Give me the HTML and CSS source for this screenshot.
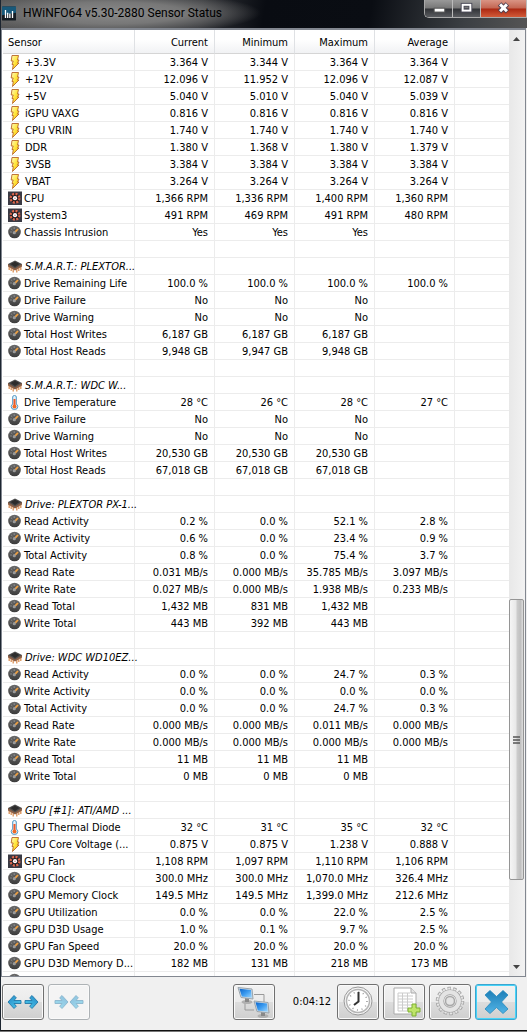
FILE: index.html
```html
<!DOCTYPE html>
<html lang="en">
<head>
<meta charset="utf-8">
<title>HWiNFO64 v5.30-2880 Sensor Status</title>
<link rel="stylesheet" href="styles.css">
<script src="sensors.js" defer></script>
</head>
<body>
<svg class="defs" aria-hidden="true">
  <defs>
    <linearGradient id="gold" x1="0" y1="0" x2="1" y2="1"><stop offset="0" stop-color="#fffbc0"/><stop offset=".5" stop-color="#ffe63c"/><stop offset="1" stop-color="#f4a70c"/></linearGradient>
    <linearGradient id="dial" x1="0" y1="0" x2="0" y2="1"><stop offset="0" stop-color="#6a6a6a"/><stop offset="1" stop-color="#3c3c3c"/></linearGradient>
    <linearGradient id="blue" x1="0" y1="0" x2="1" y2="1"><stop offset="0" stop-color="#2586c4"/><stop offset="1" stop-color="#4fd0f0"/></linearGradient>
    <linearGradient id="screen" x1="0" y1="0" x2="1" y2="1"><stop offset="0" stop-color="#0b65cc"/><stop offset=".5" stop-color="#3c9cf0"/><stop offset="1" stop-color="#a0d8ff"/></linearGradient>
    <linearGradient id="cross" x1="0" y1="0" x2="0" y2="1"><stop offset="0" stop-color="#1d7fb8"/><stop offset="1" stop-color="#52b4e6"/></linearGradient>
    <symbol id="volt" viewBox="0 0 14 15"><path d="M4 .5h6.500l-1 4.500h1.500L9.500 8H11L4.500 14.500l.8-5H4L5.200 6H3.200z" fill="url(#gold)" stroke="#b8662a" stroke-width=".9"/></symbol>
    <symbol id="gauge" viewBox="0 0 14 15"><circle cx="6.500" cy="7" r="6.300" fill="url(#dial)"/><path d="M2.500 7h1M3.500 4.200l.7.6M6.200 2.600v1" stroke="#bbb"/><path d="M7 7.200L10 4" stroke="#f0a040" stroke-width="1.800"/><circle cx="6.300" cy="7.700" r="1.600" fill="#999"/></symbol>
    <symbol id="fan" viewBox="0 0 14 15"><path d="M0 .5h14v13.500H0z" fill="#3a3a44"/><circle cx="7" cy="7.200" r="4.600" fill="#241c20"/><circle cx="7" cy="7.200" r="4.400" fill="none" stroke="#e2684c" stroke-width="2.200" stroke-dasharray="2 1.450"/><circle cx="7" cy="7.200" r="2.100" fill="#fff"/><circle cx="7" cy="7.200" r=".7" fill="#c66"/></symbol>
    <symbol id="chip" viewBox="0 0 14 15"><path d="M1.200 6v5M3.200 7v5M5.200 8v5.500M8.800 8v5.500M10.800 7v5M12.800 6v5" stroke="#d98f55" stroke-width="1.300"/><path d="M0 7.500l7 4 7-4V5H0z" fill="#8a6048"/><path d="M0 5L7 1.500 14 5l-7 4.500z" fill="#4c4c4c"/><path d="M2.500 5L7 2.800 11.500 5 7 8z" fill="#2c2c2c"/></symbol>
    <symbol id="temp" viewBox="0 0 14 15"><path d="M4.700 2q0-1.500 1.800-1.500T8.300 2v7q1.500 1 1.500 2.500 0 3-3.300 3t-3.300-3Q3.200 10 4.700 9z" fill="#e6f3fb" stroke="#4f96c4"/><path d="M6.500 4v6" stroke="#f05a28" stroke-width="2"/><circle cx="6.500" cy="11.500" r="2" fill="#f06a28"/></symbol>
    <symbol id="arrow" viewBox="0 0 15 16"><path d="M1 8l6-6.500 2.300 2.300L7 6.500h7v3H7l2.300 2.700L7 14.500z" fill="url(#blue)" stroke="#2278a8" stroke-width=".9"/></symbol>
  </defs>
</svg>
<main class="window">
  <header class="titlebar">
    <svg class="app-icon" viewBox="0 0 16 16" aria-hidden="true"><rect width="16" height="16" rx="1" fill="#151c22"/><path d="M0 0h16v7L0 10z" fill="#18597a"/><path d="M4 4v9M6.500 7v6M9 8v5M12 5v8" stroke="#fff" stroke-width="1.500"/></svg>
    <h1 class="title">HWiNFO64 v5.30-2880 Sensor Status</h1>
    <div class="caption">
      <button class="cap" aria-label="Minimize"><svg viewBox="0 0 28 17"><rect x="9.500" y="8.500" width="11" height="4" fill="#fff" stroke="#555"/></svg></button>
      <button class="cap" aria-label="Maximize"><svg viewBox="0 0 28 17"><rect x="10" y="5" width="8" height="6" fill="none" stroke="#4b4b58" stroke-width="4"/><rect x="10" y="5" width="8" height="6" fill="none" stroke="#fff" stroke-width="2"/></svg></button>
      <button class="cap cap-close" aria-label="Close"><svg viewBox="0 0 46 17"><path d="M19 4l8 8M27 4l-8 8" stroke="#504050" stroke-width="5"/><path d="M19.500 4.500l7 7M26.500 4.500l-7 7" stroke="#fff" stroke-width="3"/></svg></button>
    </div>
  </header>
  <section class="list">
    <div class="viewport">
      <table class="sensors">
        <colgroup><col class="col-name"><col class="col-value"><col class="col-value"><col class="col-value"><col class="col-value"><col></colgroup>
        <thead><tr><th>Sensor</th><th>Current</th><th>Minimum</th><th>Maximum</th><th>Average</th><th></th></tr></thead>
        <tbody id="rows"></tbody>
      </table>
    </div>
    <div class="scrollbar">
      <button class="step" aria-label="Scroll up"><svg viewBox="0 0 7 4"><path d="M0 4l3.500-4L7 4z" fill="#444"/></svg></button>
      <div class="space-above"></div>
      <div class="thumb"><svg class="grip" viewBox="0 0 7 8"><path d="M0 1h7M0 4h7M0 7h7" stroke="#555" stroke-width="1.500"/></svg></div>
      <div class="space-below"></div>
      <button class="step" aria-label="Scroll down"><svg viewBox="0 0 7 4"><path d="M0 0l3.500 4L7 0z" fill="#444"/></svg></button>
    </div>
  </section>
  <footer class="toolbar">
    <div class="group">
      <button class="tool" aria-label="Expand columns"><svg viewBox="0 0 40 34"><use href="#arrow" x="4" y="9" width="15" height="16"/><use href="#arrow" x="4" y="9" width="15" height="16" transform="matrix(-1 0 0 1 40 0)"/></svg></button>
      <button class="tool" disabled aria-label="Shrink columns"><svg viewBox="0 0 40 34"><use href="#arrow" x="20" y="9" width="15" height="16"/><use href="#arrow" x="20" y="9" width="15" height="16" transform="matrix(-1 0 0 1 40 0)"/></svg></button>
    </div>
    <div class="group">
      <button class="tool" aria-label="Network"><svg viewBox="0 0 40 34"><path d="M20 9.500h10V17M11 18v7h9" fill="none" stroke="#999"/><ellipse cx="13" cy="17" rx="5.500" ry="2" fill="#b0b0b0"/><path d="M11 12h4v5h-4z" fill="#888"/><path d="M4 2.500L18 4l1 10L7 12.500z" fill="#d5dde4" stroke="#99a4ac"/><path d="M5.500 3.800L17 5l.8 7.800L7.800 11.500z" fill="url(#screen)"/><ellipse cx="29" cy="31" rx="5.500" ry="2" fill="#b0b0b0"/><path d="M27 26h4v5h-4z" fill="#888"/><path d="M20 16l14 1.500 1 10.500-12-1.500z" fill="#d5dde4" stroke="#99a4ac"/><path d="M21.500 17.300L33 18.500l.8 8.200-10-1.200z" fill="url(#screen)"/></svg></button>
      <output class="timer">0:04:12</output>
      <button class="tool" aria-label="Reset clock"><svg viewBox="0 0 40 34"><circle cx="20" cy="16" r="14" fill="#f4f4f4" stroke="#999"/><circle cx="20" cy="16" r="11.500" fill="#fff" stroke="#b5b5b5" stroke-width="1.500"/><circle cx="20" cy="16" r="9" fill="none" stroke="#999" stroke-width="1.500" stroke-dasharray="1 3.712"/><path d="M20.500 7v9.500L16 20" fill="none" stroke="#333" stroke-width="2"/></svg></button>
      <button class="tool" aria-label="Log report"><svg viewBox="0 0 40 34"><path d="M10 3h17l5 5v21H10z" fill="#fff" stroke="#aaa"/><path d="M27 3v5h5" fill="#e4e4e4" stroke="#aaa"/><path d="M14 8h12M14 11h15M14 14h15M14 17h15M14 20h14M14 23h9M14 26h9M14 8v18M18.500 8v18M23.500 8v18" stroke="#ccc"/><path d="M28 19h4v4h4v4h-4v4h-4v-4h-4v-4h4z" fill="#bfe569" stroke="#7daf32"/></svg></button>
      <button class="tool" aria-label="Settings"><svg viewBox="0 0 40 34"><circle cx="20" cy="16" r="12.500" fill="none" stroke="#a0a0a0" stroke-width="3.500" stroke-dasharray="3.300 2.310"/><circle cx="20" cy="16" r="12.200" fill="none" stroke="#e6e6e6" stroke-width="2.500" stroke-dasharray="2.200 3.275" stroke-dashoffset="-.5"/><circle cx="20" cy="16" r="8.800" fill="none" stroke="#a0a0a0" stroke-width="5.500"/><circle cx="20" cy="16" r="8.800" fill="none" stroke="#e4e4e4" stroke-width="4.300"/><circle cx="20" cy="16" r="4.500" fill="#e4e4e4" stroke="#a8a8a8" stroke-width="1.500"/></svg></button>
      <button class="tool tool-default" aria-label="Close sensors"><svg viewBox="0 0 40 34"><path d="M14 5.500l6.500 6L27 5.500l5 4.500-6.500 7 6.500 7-5 4.500-6.500-6-6.500 6L9 24l6.500-7L9 10z" fill="url(#cross)" stroke="#2589bd" stroke-width=".8"/></svg></button>
    </div>
  </footer>
</main>
</body>
</html>
```
FILE: sensors.js
```js
// icon | name | current | minimum | maximum | average; an empty line is a spacer row
const readings = `volt|+3.3V|3.364 V|3.344 V|3.364 V|3.364 V
volt|+12V|12.096 V|11.952 V|12.096 V|12.087 V
volt|+5V|5.040 V|5.010 V|5.040 V|5.039 V
volt|iGPU VAXG|0.816 V|0.816 V|0.816 V|0.816 V
volt|CPU VRIN|1.740 V|1.740 V|1.740 V|1.740 V
volt|DDR|1.380 V|1.368 V|1.380 V|1.379 V
volt|3VSB|3.384 V|3.384 V|3.384 V|3.384 V
volt|VBAT|3.264 V|3.264 V|3.264 V|3.264 V
fan|CPU|1,366 RPM|1,336 RPM|1,400 RPM|1,360 RPM
fan|System3|491 RPM|469 RPM|491 RPM|480 RPM
gauge|Chassis Intrusion|Yes|Yes|Yes|

chip|S.M.A.R.T.: PLEXTOR...||||
gauge|Drive Remaining Life|100.0 %|100.0 %|100.0 %|100.0 %
gauge|Drive Failure|No|No|No|
gauge|Drive Warning|No|No|No|
gauge|Total Host Writes|6,187 GB|6,187 GB|6,187 GB|
gauge|Total Host Reads|9,948 GB|9,947 GB|9,948 GB|

chip|S.M.A.R.T.: WDC W...||||
temp|Drive Temperature|28 °C|26 °C|28 °C|27 °C
gauge|Drive Failure|No|No|No|
gauge|Drive Warning|No|No|No|
gauge|Total Host Writes|20,530 GB|20,530 GB|20,530 GB|
gauge|Total Host Reads|67,018 GB|67,018 GB|67,018 GB|

chip|Drive: PLEXTOR PX-1...||||
gauge|Read Activity|0.2 %|0.0 %|52.1 %|2.8 %
gauge|Write Activity|0.6 %|0.0 %|23.4 %|0.9 %
gauge|Total Activity|0.8 %|0.0 %|75.4 %|3.7 %
gauge|Read Rate|0.031 MB/s|0.000 MB/s|35.785 MB/s|3.097 MB/s
gauge|Write Rate|0.027 MB/s|0.000 MB/s|1.938 MB/s|0.233 MB/s
gauge|Read Total|1,432 MB|831 MB|1,432 MB|
gauge|Write Total|443 MB|392 MB|443 MB|

chip|Drive: WDC WD10EZ...||||
gauge|Read Activity|0.0 %|0.0 %|24.7 %|0.3 %
gauge|Write Activity|0.0 %|0.0 %|0.0 %|0.0 %
gauge|Total Activity|0.0 %|0.0 %|24.7 %|0.3 %
gauge|Read Rate|0.000 MB/s|0.000 MB/s|0.011 MB/s|0.000 MB/s
gauge|Write Rate|0.000 MB/s|0.000 MB/s|0.000 MB/s|0.000 MB/s
gauge|Read Total|11 MB|11 MB|11 MB|
gauge|Write Total|0 MB|0 MB|0 MB|

chip|GPU [#1]: ATI/AMD ...||||
temp|GPU Thermal Diode|32 °C|31 °C|35 °C|32 °C
volt|GPU Core Voltage (...|0.875 V|0.875 V|1.238 V|0.888 V
fan|GPU Fan|1,108 RPM|1,097 RPM|1,110 RPM|1,106 RPM
gauge|GPU Clock|300.0 MHz|300.0 MHz|1,070.0 MHz|326.4 MHz
gauge|GPU Memory Clock|149.5 MHz|149.5 MHz|1,399.0 MHz|212.6 MHz
gauge|GPU Utilization|0.0 %|0.0 %|22.0 %|2.5 %
gauge|GPU D3D Usage|1.0 %|0.1 %|9.7 %|2.5 %
gauge|GPU Fan Speed|20.0 %|20.0 %|20.0 %|20.0 %
gauge|GPU D3D Memory D...|182 MB|131 MB|218 MB|173 MB
gauge|||||`;

document.getElementById("rows").innerHTML = readings.split("\n").map(line => {
  const [icon, name = "", ...values] = line.split("|");
  const label = icon
    ? `<span class="name name-${icon}"><svg class="icon" aria-hidden="true"><use href="#${icon}"/></svg>${name}</span>`
    : "";
  const cells = [0, 1, 2, 3].map(i => `<td>${values[i] || ""}</td>`).join("");
  return `<tr><td>${label}</td>${cells}<td></td></tr>`;
}).join("");
```
FILE: styles.css
```css
* { box-sizing: border-box; }
body {
  margin: 0;
  font: 11px/16px "DejaVu Sans Condensed", "DejaVu Sans", sans-serif;
  color: #000;
  background: #777;
}
button { padding: 0; font: inherit; }
button svg { display: block; }
.defs { position: absolute; width: 0; height: 0; }
.window {
  display: flex;
  flex-direction: column;
  height: calc(100vh - 1px);
  border-left: 1px solid #1c2530;
  border-bottom: 1px solid #111;
  background: #f0f0f0;
}
.titlebar {
  display: flex;
  align-items: flex-start;
  height: 28px;
  flex: none;
  padding-left: 1px;
  background:
    radial-gradient(ellipse 150px 22px at 110px 13px, #8b8b8b 0, #777 50%, transparent 100%),
    linear-gradient(100deg, #555 0, #303236 38%, #090c12 50%, #0a0d13 70%, #3b3f43 88%, #555 100%);
}
.app-icon { width: 14px; height: 15px; margin-top: 6px; }
.title {
  flex: 1;
  margin: 5px 0 0 7px;
  font: 12px/16px Roboto, "Noto Sans", sans-serif;
  white-space: nowrap;
}
.caption {
  display: flex;
  border: 1px solid #aaa;
  border-width: 0 0 1px 1px;
  border-radius: 0 0 0 5px;
  overflow: hidden;
}
.cap {
  width: 28px;
  height: 17px;
  border: 0;
  border-right: 1px solid #bbb;
  background: linear-gradient(#999 0, #777 48%, #303236 52%, #5a5c60 100%);
}
.cap-close {
  width: 46px;
  background: linear-gradient(#d99484 0, #c36551 48%, #ab2812 52%, #d15a38 100%);
}
.list {
  display: flex;
  flex: 1;
  min-height: 0;
  margin-right: 1px;
  border: 1px solid #828790;
  border-top-width: 2px;
  background: #fff;
}
.viewport { flex: 1; min-width: 0; overflow: hidden; padding-left: 1px; }
.sensors {
  width: 100%;
  table-layout: fixed;
  border-spacing: 0;
}
.col-name { width: 132px; }
.col-value { width: 80px; }
.sensors th, .sensors td {
  white-space: nowrap;
  text-align: right;
}
.sensors th {
  height: 24px;
  padding: 2px 6px 0 0;
  border-right: 1px solid #dfe1e4;
  border-bottom: 1px solid #d5d5d5;
  background: linear-gradient(#fff 40%, #f1f2f4);
  font-weight: normal;
}
.sensors td {
  height: 17px;
  padding: 2px 6px 0 0;
  border-right: 1px solid #ececec;
  border-bottom: 1px solid #ececec;
  line-height: 14px;
  vertical-align: top;
}
.sensors th:last-child, .sensors td:last-child { border-right: 0; }
.sensors th:first-child { padding-left: 5px; text-align: left; }
.sensors td:first-child { padding: 1px 0 0 5px; text-align: left; }
.name { display: flex; gap: 2px; height: 15px; line-height: 16px; }
.name-volt { gap: 3px; }
.name-chip { gap: 3px; font-style: italic; }
.icon { width: 14px; height: 15px; flex: none; }
.scrollbar {
  display: flex;
  flex-direction: column;
  width: 16px;
  padding-right: 1px;
  background: linear-gradient(90deg, #e8e8e8, #f2f2f2);
}
.step {
  display: grid;
  place-items: center;
  height: 17px;
  border: 0;
  background: none;
}
.step svg { width: 7px; height: 4px; }
.space-above { flex: 553; }
.space-below { flex: 79; }
.thumb {
  display: grid;
  place-items: center;
  flex: 279;
  border: 1px solid #959595;
  border-radius: 2px;
  background: linear-gradient(90deg, #f5f5f5 0, #e8e8e8 45%, #ccc 55%, #c0c0c0 80%, #ddd 100%);
}
.grip { width: 7px; height: 8px; }
.toolbar {
  display: flex;
  justify-content: space-between;
  flex: none;
  padding: 7px 10px 10px 1px;
}
.group { display: flex; align-items: center; gap: 4px; }
.tool {
  width: 42px;
  height: 36px;
  border: 1px solid #707070;
  border-radius: 3px;
  background: linear-gradient(#f2f2f2 0, #ebebeb 49%, #ddd 51%, #cfcfcf 100%);
  box-shadow: inset 0 0 0 1px #fafafa;
}
.tool:disabled { border-color: #adb2b5; background: #f4f4f4; }
.tool:disabled svg { opacity: .5; }
.tool-default {
  border-color: #3ba6d0;
  box-shadow: inset 0 0 0 1px #47d3f8;
}
.timer { width: 54px; padding-right: 2px; text-align: right; }
```
